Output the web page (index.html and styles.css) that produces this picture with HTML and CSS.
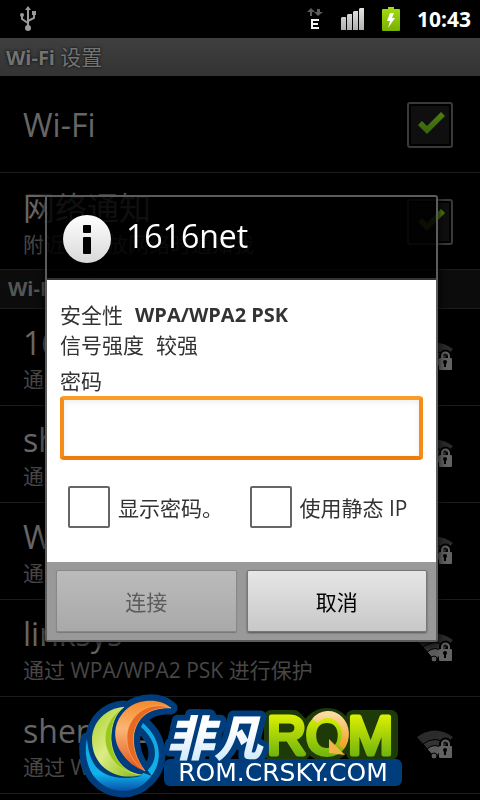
FILE: index.html
```html
<!DOCTYPE html>
<html lang="zh-CN">
<head>
    <meta charset="UTF-8">
    <meta name="viewport" content="width=device-width, initial-scale=1.0">
    <title>Wi-Fi 设置</title>
    <link rel="stylesheet" href="styles.css">
</head>
<body>
    <!-- shared wifi + lock icon -->
    <svg class="defs" width="0" height="0" aria-hidden="true">
        <symbol id="wifi-lock" viewBox="0 0 36 30">
            <path d="M18 28 L0 7 Q18 -6 36 7 Z" fill="#2b2b2b"/>
            <path d="M18 28 L6 14 Q18 5 30 14 Z" fill="#333" stroke="#000" stroke-width="1"/>
            <path d="M18 28 L10 19 Q18 12 26 19 Z" fill="#5c5c5c" stroke="#000" stroke-width="1"/>
            <circle cx="17" cy="26" r="3" fill="#5c5c5c" stroke="#000" stroke-width="1"/>
            <path d="M24 17 v-3 a4.500 4.500 0 0 1 9 0 v3" fill="none" stroke="#000" stroke-width="4"/>
            <path d="M25 17 v-3 a3.500 3.500 0 0 1 7 0 v3" fill="none" stroke="#626262" stroke-width="2"/>
            <rect x="22" y="16" width="13" height="12" rx="1" fill="#626262"/>
            <circle cx="28" cy="20" r="2" fill="#000"/>
            <rect x="27" y="20" width="2" height="5" fill="#000"/>
        </symbol>
    </svg>

    <header class="status-bar">
        <svg class="usb" width="18" height="26" viewBox="0 0 18 26">
            <g fill="none" stroke="#9a9a9a" stroke-width="2">
                <path d="M9 3 V22"/>
                <path d="M3 9 V13 L9 17"/>
                <path d="M15 8 V12 L9 15"/>
            </g>
            <g fill="#9a9a9a">
                <path d="M9 0 L12 4 H6 Z"/>
                <circle cx="3" cy="9" r="2"/>
                <rect x="13" y="5" width="4" height="4"/>
                <circle cx="9" cy="22" r="3"/>
            </g>
        </svg>
        <svg class="data" width="16" height="22" viewBox="0 0 16 22">
            <path d="M4 0 L8 4 H5 V8 H3 V4 H0 Z M11 8 L7 4 H10 V1 H13 V4 H16 Z" fill="#5c5c5c"/>
            <path d="M4 11 H12 V13 H6 V15 H11 V17 H6 V19 H12 V21 H4 Z" fill="#f2f2f2"/>
        </svg>
        <svg class="signal" width="24" height="22" viewBox="0 0 24 22">
            <defs>
                <linearGradient id="bars" x1="0" y1="0" x2="0" y2="1">
                    <stop offset="0" stop-color="#e4e4e4"/>
                    <stop offset="1" stop-color="#b0b0b0"/>
                </linearGradient>
            </defs>
            <path d="M0 10 l1 -1 h4 v13 h-5z M6 7 l1 -1 h4 v16 h-5z M12 4 l1 -1 h4 v19 h-5z M18 1 l1 -1 h4 v22 h-5z" fill="url(#bars)"/>
        </svg>
        <svg class="battery" width="18" height="24" viewBox="0 0 18 24">
            <defs>
                <linearGradient id="charge" x1="0" y1="0" x2="0" y2="1">
                    <stop offset="0" stop-color="#a4de10"/>
                    <stop offset="1" stop-color="#77b000"/>
                </linearGradient>
            </defs>
            <path d="M1 2 H6 V0 H12 V2 H17 Q18 2 18 3 V23 Q18 24 17 24 H1 Q0 24 0 23 V3 Q0 2 1 2 Z" fill="url(#charge)"/>
            <path d="M8 6 L12 6 L10 11 L13 11 L6 21 L8 14 L5 14 Z" fill="#fff"/>
        </svg>
        <span class="clock">10:43</span>
    </header>

    <h1 class="title-bar">Wi-Fi <span>设置</span></h1>

    <main class="settings">
        <div class="row toggle">
            <label class="name" for="wifi">Wi-Fi</label>
            <input class="check" type="checkbox" id="wifi" checked>
        </div>
        <div class="row toggle">
            <label class="text" for="notify">
                <span class="name">网络通知</span>
                <span class="summary">附近有开放网络时通知我</span>
            </label>
            <input class="check" type="checkbox" id="notify" checked>
        </div>
        <h2 class="category">Wi-Fi 网络</h2>
        <div class="row">
            <div class="text">
                <span class="name">1616net</span>
                <span class="summary">通过 WPA/WPA2 PSK 进行保护</span>
            </div>
            <svg class="wifi-icon" width="36" height="30"><use href="#wifi-lock"/></svg>
        </div>
        <div class="row">
            <div class="text">
                <span class="name">shen</span>
                <span class="summary">通过 WPA/WPA2 PSK 进行保护</span>
            </div>
            <svg class="wifi-icon" width="36" height="30"><use href="#wifi-lock"/></svg>
        </div>
        <div class="row">
            <div class="text">
                <span class="name">Wang</span>
                <span class="summary">通过 WPA/WPA2 PSK 进行保护</span>
            </div>
            <svg class="wifi-icon" width="36" height="30"><use href="#wifi-lock"/></svg>
        </div>
        <div class="row">
            <div class="text">
                <span class="name">linksys</span>
                <span class="summary">通过 WPA/WPA2 PSK 进行保护</span>
            </div>
            <svg class="wifi-icon" width="36" height="30"><use href="#wifi-lock"/></svg>
        </div>
        <div class="row">
            <div class="text">
                <span class="name">sheng12</span>
                <span class="summary">通过 WPA</span>
            </div>
            <svg class="wifi-icon" width="36" height="30"><use href="#wifi-lock"/></svg>
        </div>
    </main>

    <div class="overlay">
        <form class="dialog" role="dialog" aria-labelledby="dialog-title">
            <div class="dialog-header">
                <svg width="48" height="48" viewBox="0 0 48 48">
                    <defs>
                        <linearGradient id="disc" x1="0" y1="0" x2="0" y2="1">
                            <stop offset="0" stop-color="#fff"/>
                            <stop offset="1" stop-color="#d8d8d8"/>
                        </linearGradient>
                    </defs>
                    <circle cx="24" cy="24" r="24" fill="url(#disc)"/>
                    <rect x="20" y="10" width="8" height="8" rx="1" fill="#000"/>
                    <rect x="20" y="22" width="8" height="17" rx="1" fill="#000"/>
                </svg>
                <h2 id="dialog-title">1616net</h2>
            </div>
            <div class="dialog-body">
                <p class="info"><span>安全性</span><b>WPA/WPA2 PSK</b></p>
                <p class="info"><span>信号强度</span><span>较强</span></p>
                <label class="password-label" for="password">密码</label>
                <input class="password" type="password" id="password">
                <div class="options">
                    <label><input type="checkbox">显示密码。</label>
                    <label><input type="checkbox">使用静态 IP</label>
                </div>
            </div>
            <div class="dialog-footer">
                <button type="submit" disabled>连接</button>
                <button type="button">取消</button>
            </div>
        </form>
    </div>

    <svg class="watermark" width="330" height="108" viewBox="76 690 330 108">
        <defs>
            <linearGradient id="green" x1="0" y1="0" x2="1" y2="1">
                <stop offset="0" stop-color="#a6cf2c"/>
                <stop offset="0.450" stop-color="#dcec85"/>
                <stop offset="1" stop-color="#86b80c"/>
            </linearGradient>
            <linearGradient id="orange" x1="0" y1="0" x2="0" y2="1">
                <stop offset="0" stop-color="#f58a2a"/>
                <stop offset="0.400" stop-color="#fbb573"/>
                <stop offset="1" stop-color="#e2501c"/>
            </linearGradient>
            <linearGradient id="ring" x1="0" y1="0" x2="0" y2="1">
                <stop offset="0" stop-color="#14a5e0"/>
                <stop offset="0.750" stop-color="#0fb2ea"/>
                <stop offset="1" stop-color="#0a4fa8"/>
            </linearGradient>
            <linearGradient id="lime" x1="0" y1="0" x2="0" y2="1">
                <stop offset="0.100" stop-color="#e6f500"/>
                <stop offset="0.900" stop-color="#68b010"/>
            </linearGradient>
            <linearGradient id="ice" x1="0" y1="0" x2="0" y2="1">
                <stop offset="0.400" stop-color="#fff"/>
                <stop offset="1" stop-color="#c4e4fa"/>
            </linearGradient>
            <linearGradient id="gold" x1="0" y1="0" x2="0" y2="1">
                <stop offset="0" stop-color="#fbd9a0"/>
                <stop offset="1" stop-color="#f0a020"/>
            </linearGradient>
            <path id="ring-shape" d="M87 739 C84 750 86 769 97 780 C111 794 133 795 147 781 C163 766 164 741 143 723 L141 727 C158 742 159 760 147 771 C132 782 104 780 94 764 C90 757 88 750 87 739 Z"/>
            <path id="green-shape" d="M124 707 C106 708 92 722 92 740 C92 765 114 782 141 775 C122 772 112 756 111 739 C111 725 115 714 124 707 Z"/>
            <path id="orange-shape" d="M171 708 C160 698 140 699 128 708 C113 720 112 739 121 752 C127 762 136 768 145 771 C136 759 132 746 134 733 C138 716 150 707 171 708 Z"/>
        </defs>

        <g fill="#003d7d" stroke="#003d7d" stroke-width="13" stroke-linejoin="round">
            <use href="#ring-shape"/>
            <use href="#green-shape"/>
            <use href="#orange-shape"/>
        </g>
        <use href="#ring-shape" fill="url(#ring)"/>
        <use href="#green-shape" fill="url(#green)" stroke="#003d7d" stroke-width="2" paint-order="stroke"/>
        <path d="M124 707 C107 718 102 734 107 749 C112 764 124 773 141 775 C122 772 112 756 111 739 C111 725 115 714 124 707 Z" fill="#9ac81c" stroke="#dcee80" stroke-width="0.500"/>
        <use href="#orange-shape" fill="url(#orange)" stroke="#003d7d" stroke-width="5" paint-order="stroke"/>
        <path d="M171 708 C146 699 126 718 127 739 C127 753 135 765 145 771 C136 759 132 746 134 733 C138 716 150 707 171 708 Z" fill="#e8691f" stroke="#fbc08b" stroke-width="0.500"/>

        <g fill="#1d3a08" stroke="#1d3a08" stroke-width="14" stroke-linejoin="round">
            <path d="M271 717 H294 L303 726 V753 H271 Z"/>
            <circle cx="327" cy="735" r="20"/>
            <path d="M353 717 H391 V753 H353 Z"/>
        </g>
        <rect x="164" y="759" width="238" height="27" rx="6" fill="#003d7d"/>
        <text class="mark-cn" x="166" y="756">非凡</text>
        <text class="mark-rom" x="267" y="754">ROM</text>
        <path d="M315 721 A17 19 0 0 1 341 747" fill="none" stroke="url(#gold)" stroke-width="7"/>
        <path d="M329 739 L345 755 L329 753 Z" fill="#f3b24a"/>
        <text class="mark-url" x="283" y="781">ROM.CRSKY.COM</text>
    </svg>
</body>
</html>
```

FILE: styles.css
```css
* {
    box-sizing: border-box;
}

body {
    margin: 0;
    height: 100vh;
    overflow: hidden;
    background-color: #000;
    color: #666;
    font-family: "Open Sans", "Noto Sans CJK SC", sans-serif;
    font-size: 21px;
}

h1, h2, p {
    margin: 0;
}

.defs {
    position: absolute;
}

/* status bar */
.status-bar {
    display: flex;
    align-items: center;
    height: 38px;
    padding: 0 9px 0 19px;
}

.usb {
    margin-right: auto;
}

.signal {
    margin-left: 18px;
}

.battery {
    margin-left: 17px;
}

.clock {
    margin-left: 17px;
    color: #fff;
    font-weight: 700;
}

.title-bar {
    height: 38px;
    padding-left: 6px;
    background: linear-gradient(#3f3f3f, #333);
    color: #737373;
    font-size: 20px;
    line-height: 38px;
    text-shadow: 0 0 3px #000;
}

.title-bar span {
    font-size: 21px;
    font-weight: 400;
}

/* list */
.row {
    display: flex;
    align-items: center;
    justify-content: space-between;
    height: 97px;
    padding: 0 27px 0 23px;
    border-bottom: 1px solid #1c1c1c;
}

.toggle {
    padding-top: 2px;
}

.text {
    display: flex;
    flex-direction: column;
    padding-top: 4px;
}

.name {
    font-size: 32px;
    line-height: 40px;
    white-space: nowrap;
}

.summary {
    color: #474747;
    line-height: 32px;
    white-space: nowrap;
}

.category {
    height: 39px;
    padding-left: 8px;
    border-bottom: 1px solid #1c1c1c;
    background-color: #0c0c0c;
    color: #555;
    font-size: 20px;
    line-height: 38px;
}

.check {
    appearance: none;
    flex: none;
    width: 46px;
    height: 46px;
    margin: 0;
    padding: 2px;
    border: 2px solid #393939;
    border-radius: 3px;
    background: #0f0f0f content-box;
}

.check:checked::before {
    content: "";
    display: block;
    width: 28px;
    height: 24px;
    margin: 6px 0 0 7px;
    background: linear-gradient(#4d8010, #365f0c);
    clip-path: polygon(0 13px, 4px 9px, 9px 14px, 23px 0, 27px 4px, 9px 22px);
}

.wifi-icon {
    flex: none;
}

/* dialog */
.overlay {
    position: fixed;
    top: 38px;
    right: 0;
    bottom: 0;
    left: 0;
    display: flex;
    align-items: center;
    padding: 0 42px 2px 45px;
}

.dialog {
    flex: 1;
    border: 2px solid #5c5c5c;
    border-radius: 3px;
    box-shadow: 0 2px 8px #000;
    color: #333;
}

.dialog-header {
    display: flex;
    align-items: center;
    gap: 15px;
    height: 83px;
    padding: 4px 16px 0;
    border-bottom: 2px solid #333;
    background-color: rgba(0, 0, 0, 0.85);
    color: #fff;
}

.dialog-header h2 {
    margin-bottom: 6px;
    font-size: 32px;
    font-weight: 400;
    line-height: 40px;
}

.dialog-body {
    padding: 20px 13px 34px;
    background-color: #fff;
}

.info {
    display: flex;
    gap: 12px;
    line-height: 30px;
}

.info b {
    font-size: 20px;
}

.password-label {
    display: block;
    padding-top: 6px;
    line-height: 30px;
}

.password {
    display: block;
    width: 100%;
    height: 64px;
    padding: 0 12px;
    border: 4px solid #f58a14;
    border-color: #fa9c28 #f58c18 #ef7c08;
    border-radius: 4px;
    outline: none;
    box-shadow: inset 0 2px 6px #eee;
    font-size: 24px;
}

.options {
    display: grid;
    grid-template-columns: 1fr 1fr;
    gap: 8px;
    padding: 26px 0 0 8px;
}

.options label {
    display: flex;
    align-items: center;
    gap: 8px;
    white-space: nowrap;
}

.options input {
    appearance: none;
    width: 42px;
    height: 42px;
    margin: 0;
    border: 2px solid #666;
    border-radius: 2px;
}

.dialog-footer {
    display: flex;
    gap: 10px;
    padding: 8px 9px;
    background-color: #999;
}

.dialog-footer button {
    flex: 1;
    height: 62px;
    border: 1px solid #777;
    border-radius: 2px;
    background: linear-gradient(#e6e6e6, #c8c8c8);
    box-shadow: 0 1px 2px #555;
    color: #000;
    font: inherit;
}

.dialog-footer button:disabled {
    border-color: #888;
    background: linear-gradient(#bbb, #a9a9a9);
    box-shadow: 0 1px 1px #777;
    color: #5c5c5c;
}

/* site mark over the bottom of the screen */
.watermark {
    position: fixed;
    bottom: 2px;
    left: 76px;
}

.mark-cn {
    fill: url(#ice);
    stroke: #003d7d;
    stroke-width: 12px;
    stroke-linejoin: round;
    paint-order: stroke;
    font-family: "Noto Sans CJK SC", sans-serif;
    font-size: 48px;
    font-style: italic;
    font-weight: 900;
}

.mark-rom {
    fill: url(#lime);
    stroke: url(#lime);
    stroke-width: 5px;
    stroke-linejoin: round;
    font-family: "Liberation Sans", sans-serif;
    font-size: 54px;
}

.mark-url {
    fill: #fff;
    font-family: "DejaVu Sans", sans-serif;
    font-size: 25px;
    text-anchor: middle;
}
```
